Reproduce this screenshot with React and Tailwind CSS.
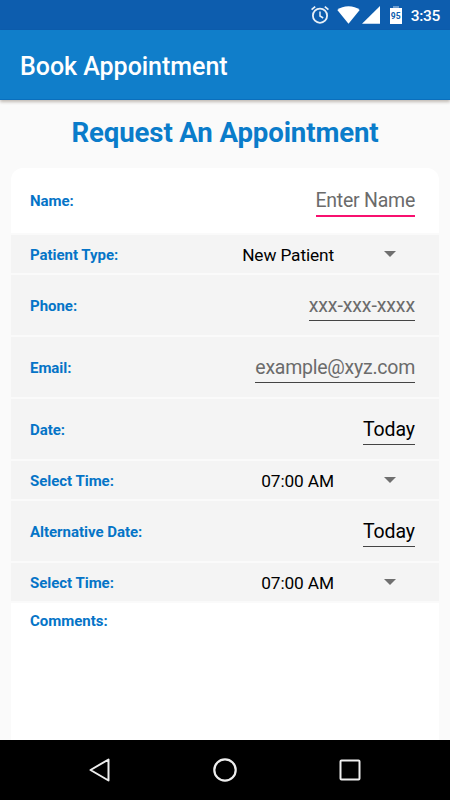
import React from 'react';
import clsx from 'clsx';

const fields = [
    { label: 'Name:', value: 'Enter Name', type: 'input', hint: true, focused: true },
    { label: 'Patient Type:', value: 'New Patient', type: 'select' },
    { label: 'Phone:', value: 'xxx-xxx-xxxx', type: 'input', hint: true, wide: true },
    { label: 'Email:', value: 'example@xyz.com', type: 'input', hint: true },
    { label: 'Date:', value: 'Today', type: 'input', wide: true },
    { label: 'Select Time:', value: '07:00 AM', type: 'select' },
    { label: 'Alternative Date:', value: 'Today', type: 'input', wide: true },
    { label: 'Select Time:', value: '07:00 AM', type: 'select' },
];

function StatusBar() {
    return (
        <div className="flex h-[30px] items-center justify-end bg-[#0d5dae] pr-[10px] text-white">
            {/* alarm */}
            <svg className="h-5 w-5" viewBox="0 0 20 20" fill="none" stroke="#e8f0f8" strokeWidth="1.8">
                <circle cx="10" cy="10.7" r="7.1" />
                <path d="M10 6.5v4.5l3.2 2" strokeWidth="1.5" />
                <path d="M1.6 4.6 5.2 1.6M18.4 4.6 14.8 1.6" />
            </svg>
            {/* wifi */}
            <svg className="ml-[7px] h-5 w-[23px]" viewBox="0 0 23 20" fill="#fff">
                <path d="M.3 4.900C3.300 2.500 7.100 1.200 11.500 1.200s8.200 1.300 11.200 3.700L11.500 18.700z" />
            </svg>
            {/* signal */}
            <svg className="ml-[2px] h-5 w-[18px]" viewBox="0 0 18 20" fill="#fff">
                <path d="M18 1v17.700H0z" />
            </svg>
            {/* battery */}
            <div className="ml-[10px] flex h-[18px] w-3 flex-col items-center">
                <div className="h-[2px] w-[6px] bg-[#6e9ed0]" />
                <div className="flex h-4 w-3 items-center justify-center bg-white text-[8.500px] leading-none font-bold text-[#0d5dae]">95</div>
            </div>
            <span className="mt-[2px] ml-[9px] text-[15.500px] leading-5 font-medium tracking-[-0.3px]">3:35</span>
        </div>
    );
}

function Field({ label, value, type, hint, focused, wide }) {
    return (
        <div
            className={clsx(
                'flex items-center justify-between pl-[19px]',
                focused ? 'h-[65px] bg-white' : type === 'input' ? 'h-[60px] bg-[#f4f4f4]' : 'h-[38px] bg-[#f4f4f4]'
            )}
        >
            <span className="mt-[1px] text-[15px] leading-5 font-bold tracking-[-0.03px] text-[#0574c7]">{label}</span>
            {type === 'input' ? (
                <span
                    className={clsx(
                        'mr-[24px] text-[19.500px] leading-6',
                        wide ? 'tracking-[-0.1px]' : 'tracking-[-0.25px]',
                        hint ? 'text-[#6b6b6b]' : 'text-black',
                        focused ? 'mt-[5px] border-b-2 border-[#f8106f] pb-[2px]' : 'mt-[4px] border-b border-[#444] pb-[2px]'
                    )}
                >
                    {value}
                </span>
            ) : (
                <span className="mr-[43px] flex items-center text-[17.300px] leading-5 tracking-[-0.12px] text-black">
                    <span className="mt-[1px]">{value}</span>
                    <svg className="ml-[50px] h-[6px] w-3" viewBox="0 0 12 6" fill="#6f6f6f">
                        <path d="M0 0h12L6 6z" />
                    </svg>
                </span>
            )}
        </div>
    );
}

function NavBar() {
    return (
        <div className="flex h-[60px] shrink-0 items-center justify-center gap-[101px] bg-black">
            <svg className="h-6 w-6" viewBox="0 0 24 24" fill="none" stroke="#eee" strokeWidth="2" strokeLinejoin="round">
                <path d="M20.500 1.500v21L2.500 12z" />
            </svg>
            <svg className="h-6 w-6" viewBox="0 0 24 24" fill="none" stroke="#eee" strokeWidth="2.2">
                <circle cx="12" cy="12" r="10.700" />
            </svg>
            <svg className="h-6 w-6" viewBox="0 0 24 24" fill="none" stroke="#eee" strokeWidth="2">
                <rect x="2.500" y="2.500" width="19" height="19" rx="1" />
            </svg>
        </div>
    );
}

function App() {
    return (
        <div className="flex h-[800px] w-[450px] flex-col overflow-hidden bg-[#fafafa] font-['Roboto',sans-serif]">
            <StatusBar />
            <header className="z-10 flex h-[70px] items-center border-b border-[#0a6fbd] bg-[#107eca] pl-[20px] shadow-[0_2px_3px_rgba(60,40,20,0.3)]">
                <h1 className="mt-[5px] text-[25px] leading-8 font-medium tracking-[-0.03px] text-white">Book Appointment</h1>
            </header>
            <h2 className="mt-[15px] text-center text-[27.600px] leading-9 font-bold tracking-[-0.12px] text-[#0a7cca]">Request An Appointment</h2>

            <main className="mx-[11px] mt-[17px] flex flex-1 flex-col gap-[2px] overflow-hidden rounded-t-[12px]">
                {fields.map((field, i) => (
                    <Field key={i} {...field} />
                ))}
                <div className="flex-1 bg-white pt-[6px] pl-[19px]">
                    <span className="text-[15px] leading-5 font-bold text-[#0574c7]">Comments:</span>
                </div>
            </main>
            <NavBar />
        </div>
    );
}

export default App;
